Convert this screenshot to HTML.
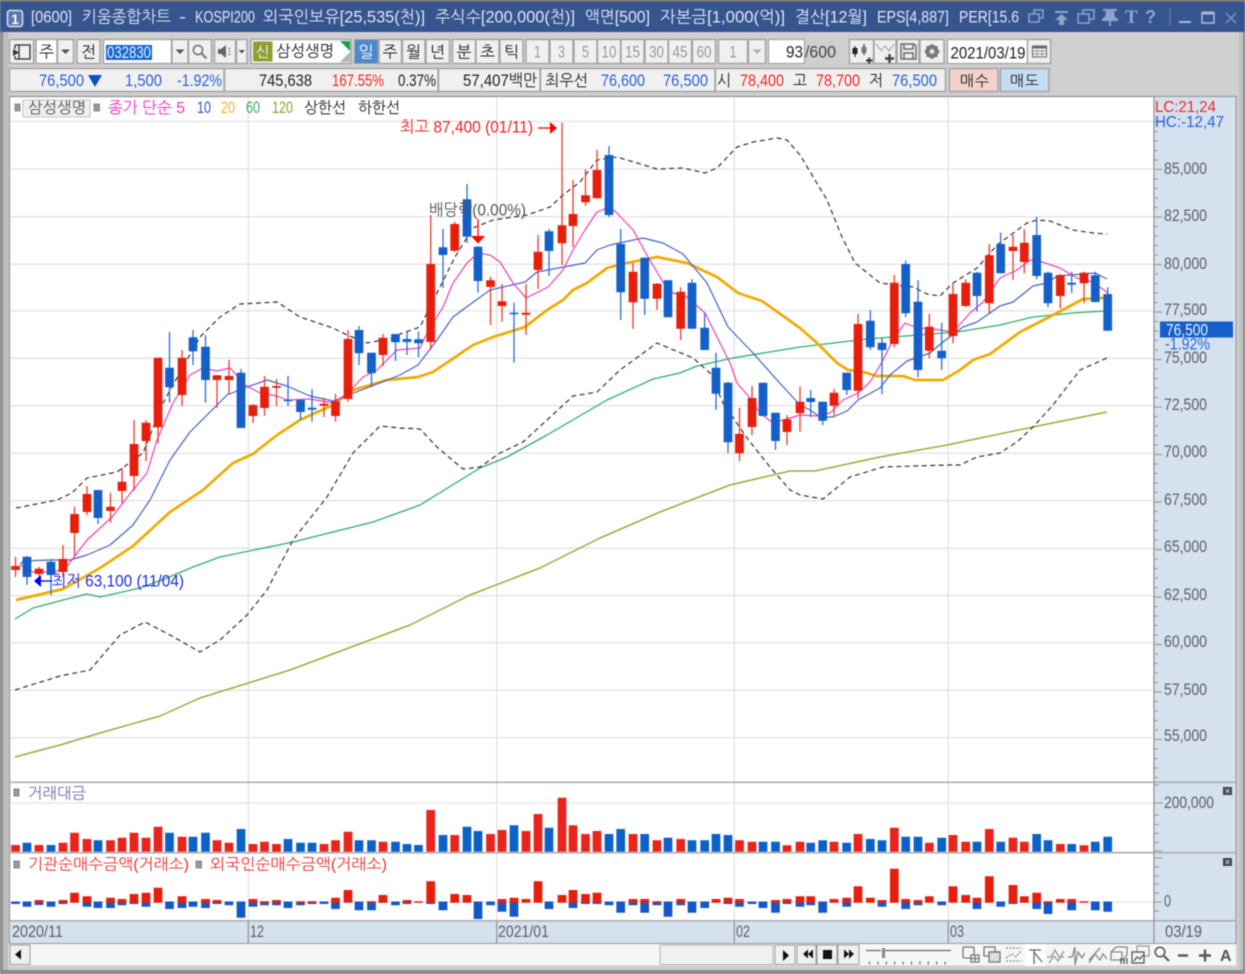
<!DOCTYPE html>
<html lang="ko">
<head>
<meta charset="utf-8">
<title>키움종합차트</title>
<style>
html,body{margin:0;padding:0;background:#cfcfcf;width:1245px;height:974px;overflow:hidden}
svg{display:block;filter:blur(.4px)}
text{font-family:"Liberation Sans","NanumGothic","Noto Sans CJK KR",sans-serif;font-size:15.5px;dominant-baseline:auto}
.t{fill:#dfe6f2;font-size:16.5px}
.b{fill:#f0f0f0;stroke:#a2a2a2;stroke-width:1.4}
.d{fill:#9a9a9a}
.k{fill:#222}
.blu{fill:#2a62d2}
.red{fill:#ee2a22}
.ax{fill:#606060;font-size:16.5px}
.g{fill:none;stroke:#e3e3e3;stroke-width:1.3}
.ic{fill:none;stroke:#8fa4cb;stroke-width:1.5}
.tb{fill:none;stroke:#777;stroke-width:1.2}
polyline{stroke-linejoin:round}
</style>
</head>
<body>
<svg width="1245" height="974" viewBox="0 0 1245 974" xmlns="http://www.w3.org/2000/svg">
<rect width="1245" height="974" fill="#cfcfcf"/>
<!-- window edges -->
<rect x="0" y="32" width="3" height="942" fill="#8b8b8b"/>
<rect x="3" y="32" width="5" height="942" fill="#bdbdbd"/>
<rect x="1239" y="32" width="6" height="942" fill="#c2c2c2"/>
<rect x="1243" y="32" width="2" height="942" fill="#8b8b8b"/>
<rect x="0" y="970" width="1245" height="4" fill="#8b8b8b"/>
<!-- title bar -->
<rect x="0" y="0" width="1245" height="32" fill="#36558f"/>
<rect x="0" y="0" width="1245" height="2" fill="#6b6b6b"/>
<rect x="7.5" y="10.5" width="15" height="16" rx="2.5" fill="#5d78a8" stroke="#d8e0ee" stroke-width="1.5"/>
<text x="15" y="24" text-anchor="middle" style="font-size:14px;font-weight:bold;fill:#fff">1</text>
<text class="t" x="31" y="22.500" textLength="41" lengthAdjust="spacingAndGlyphs">[0600]</text>
<text class="t" x="82" y="22.500" textLength="89" lengthAdjust="spacingAndGlyphs">키움종합차트</text>
<text class="t" x="179" y="22.500" textLength="7" lengthAdjust="spacingAndGlyphs">-</text>
<text class="t" x="195" y="22.500" textLength="60" lengthAdjust="spacingAndGlyphs">KOSPI200</text>
<text class="t" x="263" y="22.500" textLength="162" lengthAdjust="spacingAndGlyphs">외국인보유[25,535(천)]</text>
<text class="t" x="435" y="22.500" textLength="140" lengthAdjust="spacingAndGlyphs">주식수[200,000(천)]</text>
<text class="t" x="585" y="22.500" textLength="65" lengthAdjust="spacingAndGlyphs">액면[500]</text>
<text class="t" x="660" y="22.500" textLength="125" lengthAdjust="spacingAndGlyphs">자본금[1,000(억)]</text>
<text class="t" x="795" y="22.500" textLength="72" lengthAdjust="spacingAndGlyphs">결산[12월]</text>
<text class="t" x="877" y="22.500" textLength="72" lengthAdjust="spacingAndGlyphs">EPS[4,887]</text>
<text class="t" x="959" y="22.500" textLength="60" lengthAdjust="spacingAndGlyphs">PER[15.6</text>
<path class="ic" d="M1034 14V10H1043V18H1039M1029 14H1039V22H1029Z"/>
<path d="M1055 11H1068V13H1055ZM1061.5 14L1068 20H1064V25H1059V20H1055Z" fill="#8fa4cb"/>
<path class="ic" d="M1083 14V10H1094V19H1089M1078 14H1089V23H1078Z"/>
<path d="M1103 9H1117V11H1114L1115 17L1118 19V21H1111V26H1109V21H1102V19L1105 17L1106 11H1103Z" fill="#8fa4cb"/>
<text x="1125" y="23" style="font-family:'Liberation Serif',serif;font-size:19px;font-weight:bold;fill:#8fa4cb">T</text>
<text x="1145" y="23" style="font-size:18px;font-weight:bold;fill:#8fa4cb">?</text>
<path d="M1170 8V26" stroke="#6f86b0" stroke-width="1"/>
<path d="M1179 22H1191" stroke="#a9b8d6" stroke-width="2"/>
<rect x="1202" y="13" width="12" height="10" fill="none" stroke="#a9b8d6" stroke-width="1.6"/>
<path d="M1202 13H1214" stroke="#a9b8d6" stroke-width="3"/>
<path d="M1226 13L1236 23M1236 13L1226 23" stroke="#7f95bd" stroke-width="1.5"/>

<!-- toolbar row 1 -->
<rect class="b" x="9.5" y="39.5" width="24" height="24"/>
<path d="M15 45H30V59H15M19 45V59M15 45V49M15 56V59" fill="none" stroke="#444" stroke-width="1.5"/>
<path d="M13 49L19 52.5L13 56Z" fill="#333"/>
<rect x="36" y="39.5" width="21" height="24" fill="#fff" stroke="#a2a2a2" stroke-width="1.4"/>
<text class="k" x="46.5" y="57.500" text-anchor="middle" style="font-size:16px">주</text>
<rect class="b" x="57.5" y="39.5" width="16" height="24"/>
<path d="M61 49.5H70L65.5 54Z" fill="#555"/>
<rect class="b" x="77" y="39.5" width="23" height="24"/>
<text class="k" x="88.5" y="57.500" text-anchor="middle" style="font-size:16px">전</text>
<rect x="103.500" y="39.5" width="68" height="24" fill="#fff" stroke="#a2a2a2" stroke-width="1.4"/>
<rect x="106" y="45" width="46" height="15" fill="#1567cf"/>
<text x="107" y="58" textLength="44" lengthAdjust="spacingAndGlyphs" style="fill:#e7f0ff;font-size:16.500px">032830</text>
<rect class="b" x="172" y="39.5" width="16" height="24"/>
<path d="M175.500 49.5H184.500L180 54Z" fill="#555"/>
<rect class="b" x="188.500" y="39.5" width="23" height="24"/>
<circle cx="198" cy="50" r="4.600" fill="none" stroke="#777" stroke-width="1.6"/>
<path d="M201.500 53.5L206.500 58.5" stroke="#777" stroke-width="2"/>
<rect class="b" x="214.500" y="39.5" width="21" height="24"/>
<path d="M218 49H221L226 45V58L221 54H218Z" fill="#666"/>
<path d="M228.500 48.500h2M228.500 51.500h2M228.500 54.500h2" stroke="#777" stroke-width="1.300"/>
<rect class="b" x="236.500" y="39.5" width="10.500" height="24"/>
<path d="M238.500 50H245L241.800 53.500Z" fill="#555"/>
<rect x="251" y="39.5" width="100" height="24" fill="#fff" stroke="#a2a2a2" stroke-width="1.4"/>
<rect x="253" y="41.500" width="19.500" height="20" fill="#8f9f33"/>
<text x="262.700" y="57" text-anchor="middle" style="fill:#fff;font-size:14.500px">신</text>
<text class="k" x="276" y="56.500" textLength="58" lengthAdjust="spacingAndGlyphs" style="font-size:16px">삼성생명</text>
<path d="M340 41H350V51Z" fill="#1ea04c"/>
<path d="M350 52V62H340Z" fill="#b5b5b5"/>
<rect x="354.500" y="39.5" width="23.500" height="24" fill="#4d89cc" stroke="#a2a2a2" stroke-width="1"/>
<text x="366" y="57.500" text-anchor="middle" style="fill:#fff;font-size:16px">일</text>
<rect class="b" x="379" y="39.5" width="22.500" height="24"/><text class="k" x="390" y="57.500" text-anchor="middle" style="font-size:16px">주</text>
<rect class="b" x="402.500" y="39.5" width="22.500" height="24"/><text class="k" x="413.500" y="57.500" text-anchor="middle" style="font-size:16px">월</text>
<rect class="b" x="426" y="39.5" width="23.500" height="24"/><text class="k" x="437.500" y="57.500" text-anchor="middle" style="font-size:16px">년</text>
<rect class="b" x="452.500" y="39.5" width="23" height="24"/><text class="k" x="464" y="57.500" text-anchor="middle" style="font-size:16px">분</text>
<rect class="b" x="476" y="39.5" width="23" height="24"/><text class="k" x="487.500" y="57.500" text-anchor="middle" style="font-size:16px">초</text>
<rect class="b" x="500" y="39.5" width="23" height="24"/><text class="k" x="511.500" y="57.500" text-anchor="middle" style="font-size:16px">틱</text>
<g>
<rect class="b" x="526" y="39.5" width="23" height="24"/><rect class="b" x="550" y="39.5" width="23" height="24"/><rect class="b" x="574" y="39.5" width="23" height="24"/><rect class="b" x="597.500" y="39.5" width="23" height="24"/><rect class="b" x="621" y="39.5" width="23" height="24"/><rect class="b" x="645" y="39.5" width="23" height="24"/><rect class="b" x="668.500" y="39.5" width="23" height="24"/><rect class="b" x="692.500" y="39.5" width="23" height="24"/>
<rect class="b" x="718.500" y="39.5" width="29" height="24"/><rect class="b" x="748.500" y="39.5" width="17" height="24"/>
</g>
<g>
<text x="537.500" y="57.500" text-anchor="middle" fill="#999" style="font-size:16.500px" textLength="7" lengthAdjust="spacingAndGlyphs">1</text>
<text x="561.500" y="57.500" text-anchor="middle" fill="#999" style="font-size:16.500px" textLength="7" lengthAdjust="spacingAndGlyphs">3</text>
<text x="585.500" y="57.500" text-anchor="middle" fill="#999" style="font-size:16.500px" textLength="7" lengthAdjust="spacingAndGlyphs">5</text>
<text x="609" y="57.500" text-anchor="middle" fill="#999" style="font-size:16.500px" textLength="15" lengthAdjust="spacingAndGlyphs">10</text>
<text x="632.500" y="57.500" text-anchor="middle" fill="#999" style="font-size:16.500px" textLength="15" lengthAdjust="spacingAndGlyphs">15</text>
<text x="656.500" y="57.500" text-anchor="middle" fill="#999" style="font-size:16.500px" textLength="15" lengthAdjust="spacingAndGlyphs">30</text>
<text x="680" y="57.500" text-anchor="middle" fill="#999" style="font-size:16.500px" textLength="15" lengthAdjust="spacingAndGlyphs">45</text>
<text x="704" y="57.500" text-anchor="middle" fill="#999" style="font-size:16.500px" textLength="15" lengthAdjust="spacingAndGlyphs">60</text>
<text x="733" y="57.500" text-anchor="middle" fill="#999" style="font-size:16.500px" textLength="7" lengthAdjust="spacingAndGlyphs">1</text>
</g>
<path d="M752.500 49.500H761.500L757 54Z" fill="#b0b0b0"/>
<rect x="768.500" y="39.5" width="36" height="24" fill="#fff" stroke="#a2a2a2" stroke-width="1.2"/>
<text class="k" x="786" y="57.500" textLength="17" lengthAdjust="spacingAndGlyphs" style="font-size:16.500px">93</text>
<text x="805" y="57.500" textLength="31" lengthAdjust="spacingAndGlyphs" fill="#444" style="font-size:16.500px">/600</text>
<!-- toolbar icons right -->
<rect class="b" x="849.500" y="39.5" width="24" height="24"/>
<path d="M855 46V57M864 44V55" stroke="#333" stroke-width="1.200"/>
<rect x="852.500" y="48" width="5" height="6" fill="#222"/><rect x="861.500" y="47" width="5" height="6" fill="#777"/>
<path d="M866 60.500H872.500M869.200 57.500V63.500" stroke="#333" stroke-width="2"/>
<rect class="b" x="874" y="39.5" width="22" height="24"/>
<path d="M876 44L881 50L885 46L889 51L894 44M878 47L882 51" fill="none" stroke="#aaa" stroke-width="1.200"/>
<path d="M885 58.500H894M889.500 54V63" stroke="#444" stroke-width="2.400"/>
<rect class="b" x="897" y="39.5" width="22" height="24"/>
<path d="M901 44H914L916 46V59H901ZM904 44V49H913V44M904 59V53H913V59" fill="none" stroke="#777" stroke-width="1.700"/>
<rect class="b" x="920" y="39.5" width="24" height="24"/>
<circle cx="932" cy="51.500" r="5" fill="none" stroke="#777" stroke-width="3.200"/>
<path d="M932 44V59M924.500 51.500H939.500M926.700 46.200L937.300 56.800M937.300 46.200L926.700 56.800" stroke="#777" stroke-width="1.800"/>
<circle cx="932" cy="51.500" r="2.200" fill="#f0f0f0"/>
<rect x="947.500" y="39.5" width="80" height="24" fill="#fff" stroke="#a2a2a2" stroke-width="1.2"/>
<text class="k" x="950.500" y="58.500" textLength="75" lengthAdjust="spacingAndGlyphs" style="font-size:17px">2021/03/19</text>
<rect class="b" x="1027.500" y="39.5" width="23" height="24"/>
<rect x="1032.500" y="46" width="14" height="11" fill="none" stroke="#777" stroke-width="1.200"/>
<path d="M1032.500 47.500H1046.500" stroke="#666" stroke-width="2"/>
<path d="M1032.500 51H1046.500M1032.500 54H1046.500M1037 49V57M1042 49V57" stroke="#999" stroke-width=".9"/>

<!-- toolbar row 2 -->
<rect class="b" x="9.500" y="68.500" width="214.500" height="23"/>
<rect class="b" x="224.500" y="68.500" width="213.500" height="23"/>
<rect class="b" x="438.500" y="68.500" width="101.500" height="23"/>
<rect class="b" x="540.500" y="68.500" width="174.500" height="23"/>
<rect class="b" x="715.500" y="68.500" width="230" height="23"/>
<rect x="949.500" y="68.500" width="48.500" height="23" fill="#f3d2cb" stroke="#a2a2a2" stroke-width="1.4"/>
<rect x="1000.500" y="68.500" width="48.500" height="23" fill="#c5ddf2" stroke="#a2a2a2" stroke-width="1.400"/>
<g>
<text class="blu" x="39" y="86" textLength="45" lengthAdjust="spacingAndGlyphs" style="font-size:16.500px">76,500</text>
<path d="M88 75H102L95 87Z" fill="#0f4fc4"/>
<text class="blu" x="125" y="86" textLength="37" lengthAdjust="spacingAndGlyphs" style="font-size:16.500px">1,500</text>
<text class="blu" x="177" y="86" textLength="45" lengthAdjust="spacingAndGlyphs" style="font-size:16.500px">-1.92%</text>
<text class="k" x="259" y="86" textLength="53" lengthAdjust="spacingAndGlyphs" style="font-size:16.500px">745,638</text>
<text class="red" x="332" y="86" textLength="52" lengthAdjust="spacingAndGlyphs" style="font-size:16.500px">167.55%</text>
<text class="k" x="398" y="86" textLength="38" lengthAdjust="spacingAndGlyphs" style="font-size:16.500px">0.37%</text>
<text class="k" x="463" y="86" textLength="74" lengthAdjust="spacingAndGlyphs" style="font-size:16.500px">57,407백만</text>
<text class="k" x="545" y="86" textLength="43" lengthAdjust="spacingAndGlyphs" style="font-size:16px">최우선</text>
<text class="blu" x="601" y="86" textLength="44" lengthAdjust="spacingAndGlyphs" style="font-size:16.500px">76,600</text>
<text class="blu" x="663" y="86" textLength="45" lengthAdjust="spacingAndGlyphs" style="font-size:16.500px">76,500</text>
<text class="k" x="717" y="86" textLength="14" lengthAdjust="spacingAndGlyphs" style="font-size:16px">시</text>
<text class="red" x="740" y="86" textLength="44" lengthAdjust="spacingAndGlyphs" style="font-size:16.500px">78,400</text>
<text class="k" x="793" y="86" textLength="14" lengthAdjust="spacingAndGlyphs" style="font-size:16px">고</text>
<text class="red" x="816" y="86" textLength="44" lengthAdjust="spacingAndGlyphs" style="font-size:16.500px">78,700</text>
<text class="k" x="869" y="86" textLength="14" lengthAdjust="spacingAndGlyphs" style="font-size:16px">저</text>
<text class="blu" x="892" y="86" textLength="45" lengthAdjust="spacingAndGlyphs" style="font-size:16.500px">76,500</text>
<text class="k" x="960" y="86" textLength="29" lengthAdjust="spacing" style="font-size:15px">매수</text>
<text class="k" x="1010" y="86" textLength="29" lengthAdjust="spacing" style="font-size:15px">매도</text>
</g>

<!-- chart frame -->
<rect x="9.500" y="96.500" width="1226.500" height="847" fill="#fff" stroke="#9a9a9a" stroke-width="1.400"/>
<rect x="1154" y="97" width="81.500" height="846" fill="#d5e1ef"/>
<rect x="10" y="921" width="1144" height="22" fill="#d5e1ef"/>
<!-- grid -->
<path class="g" d="M10 121.500H1154M10 169H1154M10 216.800H1154M10 264.200H1154M10 310.800H1154M10 358.300H1154M10 405.700H1154M10 453.200H1154M10 500.700H1154M10 548.200H1154M10 595.700H1154M10 642.800H1154M10 690.200H1154M10 737.600H1154M10 803H1154M10 852H1154M10 902H1154"/>
<path class="g" d="M248.300 97V921M496.800 97V921M734.300 97V921M948.300 97V921"/>
<!-- panel separators -->
<path d="M10 782.300H1236M10 852.900H1236M10 920.800H1236" stroke="#a5a5a5" stroke-width="1.300"/>
<path d="M1154 97V943" stroke="#9a9a9a" stroke-width="1.400"/>
<path d="M248.300 921V943M496.800 921V943M734.300 921V943M948.300 921V943" stroke="#9a9a9a" stroke-width="1.400"/>
<!-- axis ticks -->
<line x1="1156" x2="1156" y1="121.500" y2="782" stroke="#959595" stroke-width="4" stroke-dasharray="1 8.500"/>
<line x1="1159.500" x2="1159.500" y1="121.500" y2="782" stroke="#909090" stroke-width="5" stroke-dasharray="1 46.500"/>
<path d="M1154 785H1159M1154 803H1163M1154 815H1159M1154 824.500H1159M1154 833.500H1159M1154 842.500H1159M1154 851H1162M1154 858H1162M1154 867H1159M1154 876H1159M1154 884H1159M1154 893H1159M1154 902H1162M1154 911H1159" stroke="#949494" stroke-width="1"/>
<!-- moving averages -->
<g fill="none">
<polyline stroke="#a6a63a" stroke-width="1.500" points="15,757 60,745 100,733 160,716 200,698 290,670 410,625 470,595 540,568 600,538 660,512 730,485 790,471 815,471 880,457 947,445 1033,427 1107,412"/>
<polyline stroke="#2fae63" stroke-width="1.300" points="15,619 33,608 63,600 87,594 100,597 140,588 167,578 193,567 220,557 293,542 373,522 420,505 480,468 507,457 547,435 607,400 653,379 680,373 697,366 733,358 800,347 867,339 957,332 1000,325 1033,317 1073,313 1105,311"/>
<polyline stroke="#333" stroke-width="1.200" stroke-dasharray="5 3.500" points="16,508 57,500 72,493 87,478 117,472 143,453 163,403 183,367 200,337 220,317 240,304 277,302 300,317 333,328 347,335 367,343 393,338 400,334 420,327 427,313 440,287 455,257 473,228 493,220 527,215 550,207 563,195 580,182 597,160 617,157 657,169 683,168 705,173 717,168 737,147 753,142 777,138 787,140 800,155 827,200 842,237 855,263 880,283 913,287 927,294 940,296 953,283 977,268 997,245 1027,223 1037,220 1050,221 1073,230 1093,233 1107,234"/>
<polyline stroke="#333" stroke-width="1.200" stroke-dasharray="5 3.500" points="15,690 60,676 90,670 120,635 145,622 170,635 200,652 220,640 247,615 267,590 293,540 327,497 353,453 380,426 400,428 420,429 437,447 463,469 480,467 500,453 523,442 547,420 573,396 597,392 620,370 657,343 693,358 710,373 723,403 747,438 770,467 790,490 800,495 823,499 850,477 883,467 947,465 960,465 977,457 1000,453 1017,442 1033,427 1053,405 1080,370 1107,358"/>
<polyline stroke="#f0aa00" stroke-width="2.700" points="16,600 63,589 100,568 133,546 170,512 203,490 233,463 253,454 277,435 300,420 333,405 353,390 387,380 418,377 433,372 473,345 493,337 525,327 547,310 563,300 573,290 587,283 607,268 627,263 657,257 687,263 717,277 738,293 762,301 800,328 817,343 837,363 848,370 863,372 877,376 903,376 915,380 943,380 960,370 973,360 990,354 1020,332 1057,313 1083,299 1105,298"/>
<polyline stroke="#4461c9" stroke-width="1.200" points="20,565 23,561 50,560 70,560 87,555 110,545 133,525 150,500 170,460 190,432 207,415 227,395 247,387 267,380 287,386 310,396 333,401 390,379 400,375 418,365 437,340 453,317 472,303 490,290 525,282 537,272 585,263 597,250 610,245 643,238 663,243 683,254 707,283 728,327 753,353 777,380 800,405 810,410 820,417 833,417 847,411 858,400 880,388 890,375 907,361 930,353 943,342 963,327 977,322 1000,306 1013,302 1033,286 1047,283 1057,276 1095,273 1107,279"/>
<polyline stroke="#ec3fbe" stroke-width="1.200" points="20,565 33,572 55,572 68,565 87,540 112,517 133,490 147,473 157,440 173,403 190,375 203,368 217,371 230,368 245,385 260,393 277,396 287,400 310,399 333,403 348,393 363,377 377,370 397,350 420,348 425,337 435,320 443,307 453,283 467,263 478,253 490,255 500,262 513,283 526,298 548,287 563,270 573,250 585,230 597,212 610,207 617,213 633,230 648,257 663,282 673,293 687,297 705,313 717,337 730,363 737,383 750,398 760,413 773,423 800,415 817,416 830,413 843,400 858,393 870,382 882,362 893,340 905,323 917,328 933,329 953,332 970,313 983,302 1000,278 1017,270 1030,260 1042,262 1060,268 1077,278 1093,282 1108,293"/>
</g>
<!-- candle wicks -->
<path fill="none" stroke="#ee3a2a" stroke-width="1.300" d="M15.500 556.700V577M39 566.700V577M63 545V577M74.500 506.700V557M87 486V515M110.500 492.700V522.700M122 468V503M134 420V490.700M146 420V461M158 357.700V443M182 350V406M217 375V408M229 360V394M253 404V423M264.500 376V416M276.500 379V406M324 397.700V417M335.500 394V421.700M348 330V401.700M383 334V366M430.700 215V350M454.700 221.700V251.700M490.500 276.700V325M502 284V321.700M526 284V335M538 235V289M562 122.700V265M573 180V247M585.500 169.300V206M597 150V198.300M633 263.300V329M657 283V310M680.700 287.300V340M739.500 407.700V461M752 386V435M787 415V445M800 386.700V431.700M834 389V416M858 314V398.300M894.300 275V347.300M929.300 314V358.300M953 284V343.300M965.700 279.300V306.700M989.300 244V313.300M1013 235V280M1024.300 229.300V273.300M1060.300 274V308.300M1084 271.700V303.300"/>
<path fill="none" stroke="#2a6ed0" stroke-width="1.300" d="M27 556V585M51 559V595M98 490V524M169.500 331.700V402.700M193 330V365M205.500 335V402.700M241 369V428M288 376V406M300.500 400V420M312 389V421.700M359 326V365M371.500 352.700V387.300M395.500 334V361M407 331.700V355M418.500 331.700V357.300M443 229V288M467 184V243M478 246V292.700M514 302.700V362.700M549 229V276M609 146V217.300M620.700 229V320M644.700 257.300V315M668 280V317.300M692 279V328.700M704.700 313.300V350M716 352.700V410M728 381.700V453M763 382.700V416M775.500 412.700V450M810.700 390V417M822.700 401.700V425M846.700 372.700V395M870.300 310V350M882 338.300V394.300M905.700 260.700V317.300M918 280V377.300M941.700 322.700V370M977 271.700V311.700M1000.700 232.700V273.300M1036.700 216.700V279.300M1048 271.700V307.300M1071.700 271.700V293.300M1095.300 271.700V302.300M1107.700 287.300V330.700"/>
<!-- candle bodies -->
<path fill="none" stroke="#e81e0c" stroke-width="8.700" d="M15.500 566V570M39 568.700V574M63 559V572M74.500 514V533M87 494V512M110.500 506.700V511M122 481.700V491M134 444V476M146 422.700V441M158 357.700V427.300M182 357.700V395M217 375.300V380M229 376V380M253 405V416M264.500 386.700V408M276.500 386V387.800M324 403.700V405.700M335.500 401.300V416M348 339V399M383 337.700V355M430.700 264V342M454.700 224V250.700M490.500 280.300V287M502 301.300V306M526 312.700V314.700M538 251.700V270M562 225.300V243.300M573 214V226M585.500 195.300V202.300M597 170V198.300M633 271.700V302.300M657 283.700V298.700M680.700 291.700V328.700M739.500 433.700V453.300M752 398V427M787 419.300V432M800 401.700V413.300M834 392.700V405.700M858 324V390.700M894.300 282.700V344M929.300 326.700V350.700M953 294V336M965.700 282.700V306M989.300 255.300V303.300M1013 246.700V251M1024.300 242.700V262M1060.300 275V296M1084 272.700V283.300"/>
<path fill="none" stroke="#1460c8" stroke-width="8.700" d="M27 556.700V577M51 561.700V575M98 490V518M169.500 367.700V387.300M193 337.300V351.300M205.500 346.700V380M241 372.700V428M288 400V401.300M300.500 400V412M312 407.700V409.700M359 330V353.300M371.500 352.700V373.300M395.500 334V342.300M407 339V342M418.500 339.300V343.300M443 247.300V255M467 199.300V236.700M478 246.700V281M514 312.700V314.300M549 231.300V251M609 155V215M620.700 244V292.300M644.700 257.700V298.700M668 280.300V317.300M692 282.700V328.700M704.700 327.700V350M716 367.700V393.700M728 382.700V442.300M763 382.700V416M775.500 412.700V441M810.700 398V402M822.700 401.700V420.700M846.700 372.700V390M870.300 320.700V347.300M882 342.700V350M905.700 264V313.300M918 301.700V370M941.700 350.700V358.300M977 272.700V296M1000.700 244V273.300M1036.700 235V276M1048 272.700V303.300M1071.700 282.700V284.700M1095.300 275.300V302M1107.700 294V330.700"/>
<!-- volume -->
<path fill="none" stroke="#e8241c" stroke-width="8.700" d="M15.500 845V851.700M39 845V851.700M63 842.700V851.700M74.500 832.700V851.700M87 839V851.700M110.500 840.300V851.700M122 837.700V851.700M134 832.700V851.700M146 837.700V851.700M158 826.700V851.700M182 836.700V851.700M217 840.300V851.700M229 842.700V851.700M253 844V851.700M264.500 841.700V851.700M276.500 844V851.700M324 844V851.700M335.500 840.300V851.700M348 831.700V851.700M383 841.700V851.700M430.700 810V851.700M454.700 835V851.700M490.500 834V851.700M502 830V851.700M526 831V851.700M538 814V851.700M562 797.700V851.700M573 825.300V851.700M585.500 834V851.700M597 831V851.700M633 834V851.700M657 840.300V851.700M680.700 839V851.700M739.500 840.300V851.700M752 841.700V851.700M787 845.300V851.700M800 841.700V851.700M834 841.700V851.700M858 834V851.700M894.300 827.700V851.700M929.300 842.700V851.700M953 835V851.700M965.700 841.700V851.700M989.300 829V851.700M1013 837.700V851.700M1024.300 841.700V851.700M1060.300 844V851.700M1084 845.300V851.700"/>
<path fill="none" stroke="#0a62c8" stroke-width="8.700" d="M27 842.700V851.700M51 845V851.700M98 840.300V851.700M169.500 832.700V851.700M193 836.700V851.700M205.500 832.700V851.700M241 829V851.700M288 839V851.700M300.500 842.700V851.700M312 842.700V851.700M359 840.300V851.700M371.500 840.300V851.700M395.500 841.700V851.700M407 844V851.700M418.500 845V851.700M443 835V851.700M467 826.700V851.700M478 831V851.700M514 825.300V851.700M549 827.700V851.700M609 834V851.700M620.700 829V851.700M644.700 834V851.700M668 837.700V851.700M692 840.300V851.700M704.700 840.300V851.700M716 834V851.700M728 835V851.700M763 841.700V851.700M775.500 841.700V851.700M810.700 842.700V851.700M822.700 840.300V851.700M846.700 842.700V851.700M870.300 839V851.700M882 840.300V851.700M905.700 836.700V851.700M918 836.700V851.700M941.700 837.700V851.700M977 841.700V851.700M1000.700 841.700V851.700M1036.700 834V851.700M1048 840.300V851.700M1071.700 844V851.700M1095.300 841.700V851.700M1107.700 836.700V851.700"/>
<!-- net buy -->
<path fill="none" stroke="#1458c8" stroke-width="8.700" d="M15.500 901.500V904M27 901.500V906.700M39 901.500V905M51 901.500V906.700M63 901.500V904M87 901.500V906.700M98 901.500V908M110.500 901.500V908M122 901.500V905.300M134 901.500V904M146 901.500V906.700M169.500 901.500V909M182 901.500V908M193 901.500V906.700M205.500 901.500V908M217 901.500V904M229 901.500V905.300M241 901.500V917.700M253 901.500V906.700M264.500 901.500V905.300M276.500 901.500V905.300M288 901.500V908M300.500 901.500V905.300M312 901.500V904M324 901.500V904M335.500 901.500V909M359 901.500V910.300M371.500 901.500V910.300M383 901.500V902.700M395.500 901.500V905.300M407 901.500V904M430.700 901.500V904M443 901.500V910.300M478 901.500V919M490.500 901.500V905.300M502 901.500V911.700M514 901.500V916.700M549 901.500V909M573 901.500V908M585.500 901.500V904M597 901.500V904M609 901.500V905.300M620.700 901.500V912.700M633 901.500V905.300M644.700 901.500V912.700M657 901.500V905.300M668 901.500V916.700M680.700 901.500V905.300M692 901.500V912.700M704.700 901.500V908M728 901.500V904M739.500 901.500V906.700M752 901.500V904M763 901.500V908M775.500 901.500V912.700M787 901.500V904M800 901.500V906.700M810.700 901.500V905.300M822.700 901.500V912.700M846.700 901.500V906.700M882 901.500V906.700M905.700 901.500V909M918 901.500V905.300M941.700 901.500V905.300M977 901.500V909M1000.700 901.500V906.700M1013 901.500V904M1036.700 901.500V909M1048 901.500V914M1071.700 901.500V910.300M1095.300 901.500V910.300M1107.700 901.500V911.700"/>
<path fill="none" stroke="#e81e0c" stroke-width="8.700" d="M39 900V902.700M63 900V902.700M74.500 892.700V902.700M87 896.300V902.700M110.500 897.700V902.700M122 899V902.700M134 894V902.700M146 892.700V902.700M158 887.700V902.700M182 896.300V902.700M205.500 899V902.700M217 900V902.700M253 899V902.700M264.500 901.300V902.700M276.500 900V902.700M300.500 901.300V902.700M312 901.300V902.700M335.500 897.700V902.700M348 890V902.700M371.500 901.300V902.700M383 895V902.700M407 900V902.700M418.500 901.300V902.700M430.700 881.300V902.700M454.700 894V902.700M467 895V902.700M502 899V902.700M514 897.700V902.700M526 899V902.700M538 881.300V902.700M562 895V902.700M573 890V902.700M585.500 894V902.700M597 892.700V902.700M633 899V902.700M644.700 899V902.700M657 901.300V902.700M680.700 899V902.700M716 899V902.700M728 897.700V902.700M739.500 899V902.700M775.500 900V902.700M787 899V902.700M800 896.300V902.700M810.700 896.300V902.700M834 899V902.700M846.700 897.700V902.700M858 886.300V902.700M870.300 897.700V902.700M882 900V902.700M894.300 868.700V902.700M905.700 899V902.700M918 900V902.700M929.300 896.300V902.700M953 886.300V902.700M965.700 895V902.700M977 897.700V902.700M989.300 876.300V902.700M1013 885V902.700M1024.300 896.300V902.700M1036.700 892.700V902.700M1048 901.300V902.700M1060.300 899V902.700M1071.700 899V902.700M1084 901.300V902.700"/>
<!-- legend -->
<rect x="15" y="104" width="5" height="7" fill="#999" stroke="#777" stroke-width=".8"/>
<rect x="23" y="100" width="67" height="17" fill="#efefef" stroke="#c6c6c6"/>
<text x="28" y="113" textLength="58" lengthAdjust="spacingAndGlyphs" fill="#555">삼성생명</text>
<rect x="94" y="104" width="5.500" height="7" fill="#999" stroke="#777" stroke-width=".8"/>
<text x="108" y="113" textLength="77" lengthAdjust="spacingAndGlyphs" fill="#ee2fc0" style="font-size:16px">종가 단순 5</text>
<text x="197" y="113" textLength="14" lengthAdjust="spacingAndGlyphs" fill="#3052d2" style="font-size:16.500px">10</text>
<text x="221" y="113" textLength="14" lengthAdjust="spacingAndGlyphs" fill="#f2b028" style="font-size:16.500px">20</text>
<text x="246" y="113" textLength="14" lengthAdjust="spacingAndGlyphs" fill="#2fb060" style="font-size:16.500px">60</text>
<text x="272" y="113" textLength="21" lengthAdjust="spacingAndGlyphs" fill="#9b9b2b" style="font-size:16.500px">120</text>
<text x="304" y="113" textLength="42" lengthAdjust="spacingAndGlyphs" fill="#222">상한선</text>
<text x="358" y="113" textLength="42" lengthAdjust="spacingAndGlyphs" fill="#222">하한선</text>
<!-- annotations -->
<text x="400" y="132.700" textLength="133" lengthAdjust="spacingAndGlyphs" fill="#f02222" style="font-size:16.500px">최고 87,400 (01/11)</text>
<path d="M538 128H552" stroke="#f00" stroke-width="1.300"/><path d="M550 122L557 128L550 134Z" fill="#f00"/>
<text x="429" y="215.500" textLength="97" lengthAdjust="spacingAndGlyphs" fill="#555" style="font-size:16.500px">배당락(0.00%)</text>
<path d="M478 219V238" stroke="#f00" stroke-width="1.300"/><path d="M471 236H485L478 243.500Z" fill="#f00"/>
<text x="52" y="586.500" textLength="132" lengthAdjust="spacingAndGlyphs" fill="#1e28e6" style="font-size:16.500px">최저 63,100 (11/04)</text>
<path d="M38 581H52" stroke="#00f" stroke-width="1.300"/><path d="M41 575L34 581L41 587Z" fill="#00f"/>
<!-- axis labels -->
<text x="1155" y="112" textLength="61" lengthAdjust="spacingAndGlyphs" style="font-size:16px" fill="#ee2a22">LC:21,24</text>
<text x="1155" y="127" textLength="69" lengthAdjust="spacingAndGlyphs" style="font-size:16px" fill="#2a62d2">HC:-12,47</text>
<g>
<text class="ax" x="1164" y="174" textLength="43" lengthAdjust="spacingAndGlyphs">85,000</text>
<text class="ax" x="1164" y="221" textLength="43" lengthAdjust="spacingAndGlyphs">82,500</text>
<text class="ax" x="1164" y="269" textLength="43" lengthAdjust="spacingAndGlyphs">80,000</text>
<text class="ax" x="1164" y="315" textLength="43" lengthAdjust="spacingAndGlyphs">77,500</text>
<text class="ax" x="1164" y="363" textLength="43" lengthAdjust="spacingAndGlyphs">75,000</text>
<text class="ax" x="1164" y="410" textLength="43" lengthAdjust="spacingAndGlyphs">72,500</text>
<text class="ax" x="1164" y="457" textLength="43" lengthAdjust="spacingAndGlyphs">70,000</text>
<text class="ax" x="1164" y="505" textLength="43" lengthAdjust="spacingAndGlyphs">67,500</text>
<text class="ax" x="1164" y="552" textLength="43" lengthAdjust="spacingAndGlyphs">65,000</text>
<text class="ax" x="1164" y="600" textLength="43" lengthAdjust="spacingAndGlyphs">62,500</text>
<text class="ax" x="1164" y="647" textLength="43" lengthAdjust="spacingAndGlyphs">60,000</text>
<text class="ax" x="1164" y="695" textLength="43" lengthAdjust="spacingAndGlyphs">57,500</text>
<text class="ax" x="1164" y="741" textLength="43" lengthAdjust="spacingAndGlyphs">55,000</text>
<text class="ax" x="1164" y="808" textLength="50" lengthAdjust="spacingAndGlyphs">200,000</text>
<text class="ax" x="1164" y="906.500" textLength="7" lengthAdjust="spacingAndGlyphs">0</text>
<text class="ax" x="1165" y="937" textLength="37" lengthAdjust="spacingAndGlyphs">03/19</text>
<text class="ax" x="12" y="937" textLength="51" lengthAdjust="spacingAndGlyphs">2020/11</text>
<text class="ax" x="250" y="937" textLength="14" lengthAdjust="spacingAndGlyphs">12</text>
<text class="ax" x="498" y="937" textLength="51" lengthAdjust="spacingAndGlyphs">2021/01</text>
<text class="ax" x="736" y="937" textLength="14" lengthAdjust="spacingAndGlyphs">02</text>
<text class="ax" x="950" y="937" textLength="14" lengthAdjust="spacingAndGlyphs">03</text>
</g>
<rect x="1160" y="321.500" width="73" height="16" fill="#1560c8"/>
<text x="1166" y="335.500" textLength="42" lengthAdjust="spacingAndGlyphs" style="font-size:16.500px" fill="#e8f0ff">76,500</text>
<rect x="1161" y="338" width="50" height="13" fill="#d5e1ef"/>
<text x="1165" y="349.500" textLength="45" lengthAdjust="spacingAndGlyphs" style="font-size:16.500px" fill="#2a6ad6">-1.92%</text>
<!-- sub panel labels -->
<rect x="14" y="789" width="5" height="7" fill="#999" stroke="#777" stroke-width=".8"/>
<text x="28" y="798.500" textLength="58" lengthAdjust="spacingAndGlyphs" fill="#6e6eaa">거래대금</text>
<rect x="14" y="861" width="5.500" height="7" fill="#999" stroke="#777" stroke-width=".8"/>
<text x="28" y="869.500" textLength="161" lengthAdjust="spacingAndGlyphs" fill="#f03030">기관순매수금액(거래소)</text>
<rect x="196" y="861" width="5.500" height="7" fill="#999" stroke="#777" stroke-width=".8"/>
<text x="210" y="869.500" textLength="177" lengthAdjust="spacingAndGlyphs" fill="#f03030">외국인순매수금액(거래소)</text>
<rect x="1223" y="787" width="9" height="8" fill="#444"/><path d="M1225.500 789L1229.500 793M1229.500 789L1225.500 793" stroke="#ccc"/>
<rect x="1223" y="858" width="9" height="8" fill="#444"/><path d="M1225.500 860L1229.500 864M1229.500 860L1225.500 864" stroke="#ccc"/>

<!-- scrollbar area -->
<rect x="9" y="944" width="1227" height="21.500" fill="#f6f6f6"/>
<rect x="10" y="945" width="20" height="19.500" fill="#f0f0f0" stroke="#9c9c9c"/>
<path d="M15 954.500L21 949.500V959.500Z" fill="#111"/>
<rect x="660" y="945" width="113" height="19.500" fill="#f0f0f0" stroke="#b0b0b0"/>
<rect x="775" y="945" width="20" height="19.500" fill="#f0f0f0" stroke="#9c9c9c"/>
<path d="M783 950L789 955.500L783 961Z" fill="#111"/>
<rect x="797" y="945" width="19" height="19.500" fill="#f0f0f0" stroke="#9c9c9c"/>
<path d="M808 949.500L803 954L808 958.500ZM813 949.500L808 954L813 958.500Z" fill="#111"/>
<rect x="817" y="945" width="20" height="19.500" fill="#f0f0f0" stroke="#9c9c9c"/>
<rect x="823" y="950" width="9" height="9" fill="#111"/>
<rect x="838" y="945" width="21" height="19.500" fill="#f0f0f0" stroke="#9c9c9c"/>
<path d="M844 949.500L849 954L844 958.500ZM849 949.500L854 954L849 958.500Z" fill="#111"/>
<!-- slider -->
<path d="M866 950.500H881M885 950.500H951" stroke="#666" stroke-width="1.200"/>
<path d="M882 948H885V958H882Z" fill="#888"/>
<line x1="869" x2="952" y1="963" y2="963" stroke="#555" stroke-width="3" stroke-dasharray="1 7.400"/>
<!-- tool icons -->
<g fill="none" stroke="#777" stroke-width="1.300">
<rect x="963" y="947" width="11" height="11" rx="1"/><rect x="971" y="955" width="8" height="7" fill="#f6f6f6"/><path d="M975 955V962M971 958.500H979"/>
<rect x="984" y="947" width="11" height="9"/><rect x="989" y="952" width="11" height="10" fill="#ddd"/><path d="M989 952H1000"/>
<path d="M1006 948H1021M1006 961H1021M1006 958L1012 954L1016 957L1021 951" stroke-dasharray="2 1.500" stroke="#888"/>
<rect x="1025" y="944" width="20" height="22" fill="#fff" stroke="none"/>
<path d="M1029 950H1041M1034 950V964M1034 952L1042 962" stroke="#666"/>
<path d="M1047 957H1051L1055 950L1059 957H1064M1049 963L1054 956L1058 961L1064 951" stroke="#999"/>
<path d="M1068 957H1072L1075 947V965L1078 952L1082 958L1085 953" stroke="#888"/>
<path d="M1089 960L1100 948M1089 963L1095 954L1100 960L1103 954L1107 959" stroke="#888"/>
<path d="M1111 952L1116 947H1127V955L1123 960H1111Z M1111 952H1122V960" stroke="#888"/>
<path d="M1121 958V964M1124 958V964M1127 958V964" stroke="#555"/>
<rect x="1137" y="946" width="12" height="10" stroke="#999"/><rect x="1132" y="952" width="12" height="11" fill="#f6f6f6" stroke="#555"/><path d="M1134 961L1137 957L1140 959L1143 955" stroke="#555"/>
<circle cx="1160" cy="952" r="4.800" stroke="#555" stroke-width="1.500"/><path d="M1164 956L1169 961" stroke="#555" stroke-width="2"/>
</g>
<path d="M1178 955.500H1188" stroke="#555" stroke-width="2.400"/>
<path d="M1199 955.500H1211M1205 949.500V961.500" stroke="#555" stroke-width="2.400"/>
<text x="1220" y="961" style="font-size:16px;font-weight:bold" fill="#555">A</text>
</svg>
</body>
</html>
